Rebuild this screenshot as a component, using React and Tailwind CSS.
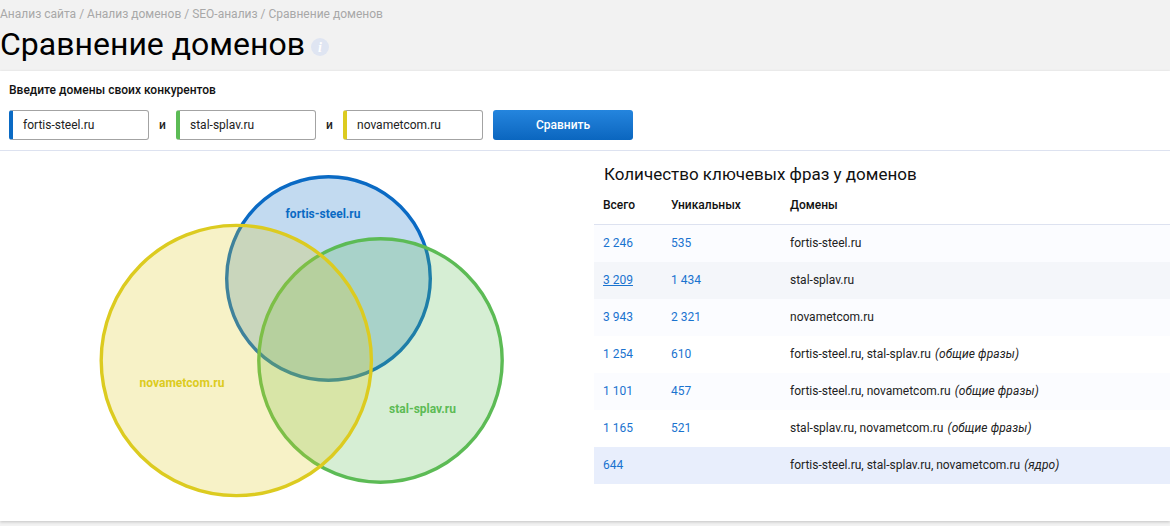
const font = { fontFamily: "Roboto, sans-serif" };

const rows = [
  { total: "2 246", uniq: "535", dom: "fortis-steel.ru", bg: "bg-[#fbfcff]" },
  { total: "3 209", uniq: "1 434", dom: "stal-splav.ru", bg: "bg-[#f4f6fa]", underline: true },
  { total: "3 943", uniq: "2 321", dom: "novametcom.ru", bg: "bg-[#fbfcff]" },
  { total: "1 254", uniq: "610", dom: "fortis-steel.ru, stal-splav.ru", note: "(общие фразы)", bg: "bg-white" },
  { total: "1 101", uniq: "457", dom: "fortis-steel.ru, novametcom.ru", note: "(общие фразы)", bg: "bg-[#fbfcff]" },
  { total: "1 165", uniq: "521", dom: "stal-splav.ru, novametcom.ru", note: "(общие фразы)", bg: "bg-white" },
  { total: "644", uniq: "", dom: "fortis-steel.ru, stal-splav.ru, novametcom.ru", note: "(ядро)", bg: "bg-[#e8eefc]" },
];

function DomainInput({ value, color }) {
  return (
    <div className={`w-[140px] h-[30px] flex items-center pl-[10px] border border-[#a3a3a3] border-l-4 rounded-[3px] text-[12px] text-[#222] bg-white ${color}`}>
      {value}
    </div>
  );
}

function Venn() {
  return (
    <svg width="594" height="369" viewBox="0 0 594 369" className="block">
      <circle cx="328.5" cy="127.5" r="101.8" fill="#0a6ac4" fillOpacity="0.25" stroke="#0a6ac4" strokeWidth="3.4" />
      <circle cx="380.5" cy="209.5" r="121.7" fill="#5cbb55" fillOpacity="0.25" stroke="#5cbb55" strokeWidth="3.4" />
      <circle cx="236.3" cy="209.5" r="135.1" fill="#dfcb20" fillOpacity="0.25" stroke="#dccb20" strokeWidth="3.4" />
      <text x="323" y="67" textAnchor="middle" fontSize="12" fontWeight="700" fill="#0a6ac4">fortis-steel.ru</text>
      <text x="182" y="236" textAnchor="middle" fontSize="12" fontWeight="700" fill="#dccb20">novametcom.ru</text>
      <text x="422.5" y="262" textAnchor="middle" fontSize="12" fontWeight="700" fill="#5cbb55">stal-splav.ru</text>
    </svg>
  );
}

export default function App() {
  return (
    <div className="w-[1170px] h-[526px] overflow-hidden bg-[#f2f2f2] flex flex-col" style={font}>
      <div className="h-[71px] shrink-0">
        <div className="pt-[7px] text-[12px] leading-[14px] text-[#a8a8a8]">
          Анализ сайта / Анализ доменов / SEO-анализ / Сравнение доменов
        </div>
        <div className="flex items-center gap-[6px] mt-[3px]">
          <h1 className="text-[32px] leading-[40px] font-normal text-black">Сравнение доменов</h1>
          <div className="w-[18px] h-[18px] mt-[6px] rounded-full bg-[#dfe5f2] flex items-center justify-center text-white text-[14px] font-bold italic" style={{ fontFamily: "'Liberation Serif', serif" }}>
            i
          </div>
        </div>
      </div>

      <div className="h-[450px] shrink-0 bg-white shadow-[0_1px_3px_rgba(0,0,0,0.2)]">
        <div className="h-[80px] border-b border-[#dde2f0] px-[9px] pt-[12px]">
          <div className="text-[12px] leading-[14px] font-medium text-[#111]">Введите домены своих конкурентов</div>
          <div className="flex items-center mt-[13px]">
            <DomainInput value="fortis-steel.ru" color="border-l-[#0a6ac4]" />
            <span className="w-[27px] text-center text-[12px] font-medium text-[#222]">и</span>
            <DomainInput value="stal-splav.ru" color="border-l-[#5cbb55]" />
            <span className="w-[27px] text-center text-[12px] font-medium text-[#222]">и</span>
            <DomainInput value="novametcom.ru" color="border-l-[#dccb20]" />
            <button className="ml-[10px] w-[140px] h-[30px] rounded-[3px] bg-gradient-to-b from-[#2485de] to-[#0a66bf] text-white text-[12px] font-medium">
              Сравнить
            </button>
          </div>
        </div>

        <div className="flex">
          <div className="w-[594px] shrink-0">
            <Venn />
          </div>
          <div className="flex-1">
            <div className="pl-[10px] pt-[13px] text-[17px] leading-[20px] text-[#111]">Количество ключевых фраз у доменов</div>
            <div className="h-[41px] pt-[2px] border-b border-[#dde2f0] flex items-center text-[12px] font-medium text-[#111]">
              <div className="w-[77px] pl-[9px]">Всего</div>
              <div className="w-[119px]">Уникальных</div>
              <div>Домены</div>
            </div>
            {rows.map((r) => (
              <div key={r.total} className={`h-[37px] pb-[2px] flex items-center text-[12px] ${r.bg}`}>
                <div className="w-[77px] pl-[9px] text-[#1a73cf]">
                  <span className={r.underline ? "underline" : ""}>{r.total}</span>
                </div>
                <div className="w-[119px] text-[#1a73cf]">{r.uniq}</div>
                <div className="text-[#222]">
                  {r.dom}
                  {r.note && <em className="italic ml-[1px] tracking-[0.1px]"> {r.note}</em>}
                </div>
              </div>
            ))}
          </div>
        </div>
      </div>
    </div>
  );
}
